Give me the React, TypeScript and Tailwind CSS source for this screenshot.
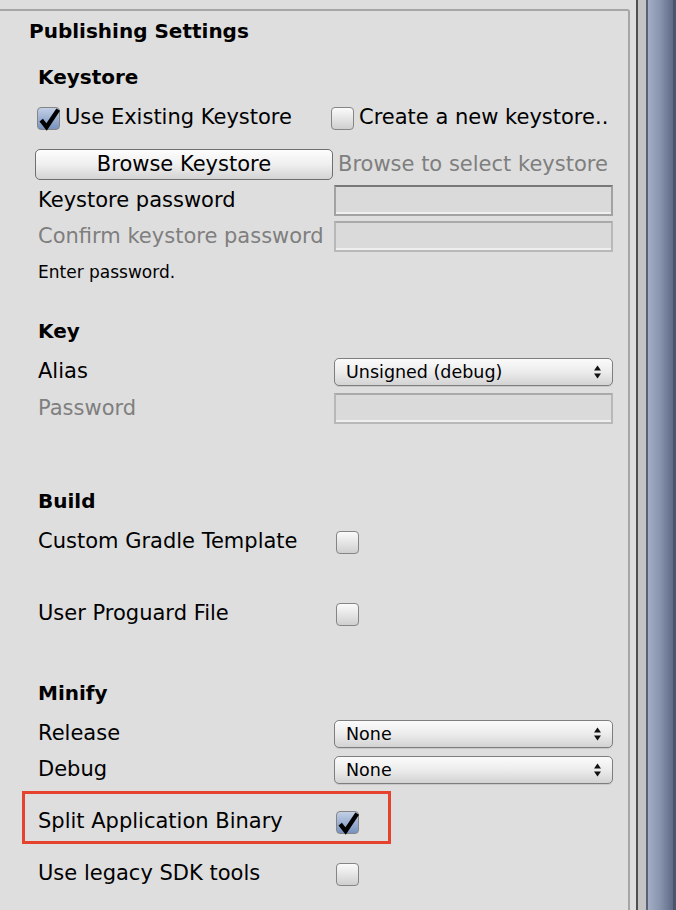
import React from "react";

const font = { fontFamily: '"DejaVu Sans", "Liberation Sans", sans-serif' };

const Checkbox: React.FC<{ checked?: boolean }> = ({ checked }) => (
  <div
    className={`relative w-[23px] h-[23px] shrink-0 rounded-[4px] border border-[#858585] ${
      checked ? "bg-gradient-to-b from-[#c3d0e6] to-[#7893bf]" : "bg-gradient-to-b from-[#fbfbfb] to-[#cfcfcf]"
    }`}
  >
    {checked && (
      <svg className="absolute -left-[1px] -top-[1px] overflow-visible" width="23" height="23" viewBox="0 0 23 23">
        <path d="M4.2 13.2 L9.6 20 L21.2 2.6" fill="none" stroke="#000" strokeWidth="4.4" strokeLinejoin="miter" />
      </svg>
    )}
  </div>
);

const TextField: React.FC<{ disabled?: boolean }> = ({ disabled }) => (
  <div
    className={`w-[279px] h-[31px] bg-[#dadada] border-2 shadow-[inset_0_-2px_0_#efefef] ${
      disabled ? "border-[#b8b8b8] border-t-[#a9a9a9]" : "border-[#a2a2a2] border-t-[#787878]"
    }`}
  />
);

const Dropdown: React.FC<{ value: string }> = ({ value }) => (
  <div className="w-[279px] h-[28px] flex items-center justify-between pl-[11px] pr-[11px] rounded-[5px] border border-[#7e7e7e] bg-gradient-to-b from-[#fbfbfb] via-[#ececec] to-[#d3d3d3] shadow-[0_1px_0_#c8c8c8]">
    <span className="text-[17.5px] text-black">{value}</span>
    <svg width="7" height="14" viewBox="0 0 7 14">
      <path d="M3.5 0.5 L7 5.5 L0 5.5Z" fill="#111" />
      <path d="M0 8.5 L7 8.5 L3.5 13.5Z" fill="#111" />
    </svg>
  </div>
);

const Heading: React.FC<{ children: React.ReactNode; className?: string }> = ({ children, className }) => (
  <div className={`h-[30px] flex items-center pl-[38px] text-[20px] font-bold text-black ${className ?? ""}`}>{children}</div>
);

const Row: React.FC<{ label: string; gray?: boolean; className?: string; children?: React.ReactNode }> = ({
  label,
  gray,
  className,
  children,
}) => (
  <div className={`flex items-center pl-[38px] ${className ?? ""}`}>
    <span className={`w-[296px] text-[21px] whitespace-nowrap ${gray ? "text-[#7f7f7f]" : "text-black"}`}>{label}</span>
    {children}
  </div>
);

export default function App() {
  return (
    <div className="w-[676px] h-[910px] flex bg-[#dedede] overflow-hidden" style={font}>
      {/* inspector */}
      <div className="w-[636px] pt-[9px] flex flex-col">
        <div className="w-[630px] flex-1 border-t-2 border-r-2 border-[#a6a6a6] rounded-tr-[3px] pt-[5px] flex flex-col">
          <div className="h-[30px] flex items-center pl-[29px] text-[20px] font-bold text-black">Publishing Settings</div>

          <Heading className="mt-[16px]">Keystore</Heading>

          <div className="mt-[12px] h-[28px] flex items-center pl-[37px] text-[21px] text-black">
            <Checkbox checked />
            <span className="ml-[5px] w-[266px] whitespace-nowrap">Use Existing Keystore</span>
            <Checkbox />
            <span className="ml-[5px] whitespace-nowrap">Create a new keystore..</span>
          </div>

          <div className="mt-[17px] h-[31px] flex items-center pl-[35px]">
            <div className="w-[298px] h-[31px] flex items-center justify-center rounded-[5px] border border-[#6f6f6f] bg-gradient-to-b from-[#fdfdfd] via-[#efefef] to-[#d4d4d4] text-[21px] text-black">
              Browse Keystore
            </div>
            <span className="ml-[5px] text-[21px] text-[#7f7f7f] whitespace-nowrap">Browse to select keystore</span>
          </div>

          <Row label="Keystore password" className="mt-[5px] h-[31px]">
            <TextField />
          </Row>
          <Row label="Confirm keystore password" gray className="mt-[5px] h-[31px]">
            <TextField disabled />
          </Row>

          <div className="mt-[9px] h-[24px] flex items-center pl-[38px] text-[17px] text-black">Enter password.</div>

          <Heading className="mt-[31px]">Key</Heading>
          <Row label="Alias" className="mt-[12px] h-[28px]">
            <Dropdown value="Unsigned (debug)" />
          </Row>
          <Row label="Password" gray className="mt-[7px] h-[31px]">
            <TextField disabled />
          </Row>

          <Heading className="mt-[62px]">Build</Heading>
          <Row label="Custom Gradle Template" className="mt-[12px] h-[28px]">
            <div className="pl-[2px]">
              <Checkbox />
            </div>
          </Row>
          <Row label="User Proguard File" className="mt-[44px] h-[28px]">
            <div className="pl-[2px]">
              <Checkbox />
            </div>
          </Row>

          <Heading className="mt-[50px]">Minify</Heading>
          <Row label="Release" className="mt-[12px] h-[28px]">
            <Dropdown value="None" />
          </Row>
          <Row label="Debug" className="mt-[8px] h-[28px]">
            <Dropdown value="None" />
          </Row>

          <div className="mt-[7px] ml-[22px] w-[369px] h-[53px] border-[3px] border-[#e5432d] flex items-center pl-[13px] pt-[9px]">
            <span className="w-[296px] text-[21px] text-black whitespace-nowrap">Split Application Binary</span>
            <div className="pl-[2px]">
              <Checkbox checked />
            </div>
          </div>

          <Row label="Use legacy SDK tools" className="mt-[16px] h-[28px]">
            <div className="pl-[2px]">
              <Checkbox />
            </div>
          </Row>
        </div>
      </div>

      {/* divider + scrollbar */}
      <div className="w-[2px] bg-[#4f4f4f]" />
      <div className="w-[8px] bg-[#c4c4c4]" />
      <div className="w-[2px] bg-[#5b6275]" />
      <div className="flex-1 bg-gradient-to-r from-[#a3aec5] via-[#8793ad] to-[#5f6b86]" />
      <div className="w-[3px] bg-[#4c556b]" />
    </div>
  );
}
